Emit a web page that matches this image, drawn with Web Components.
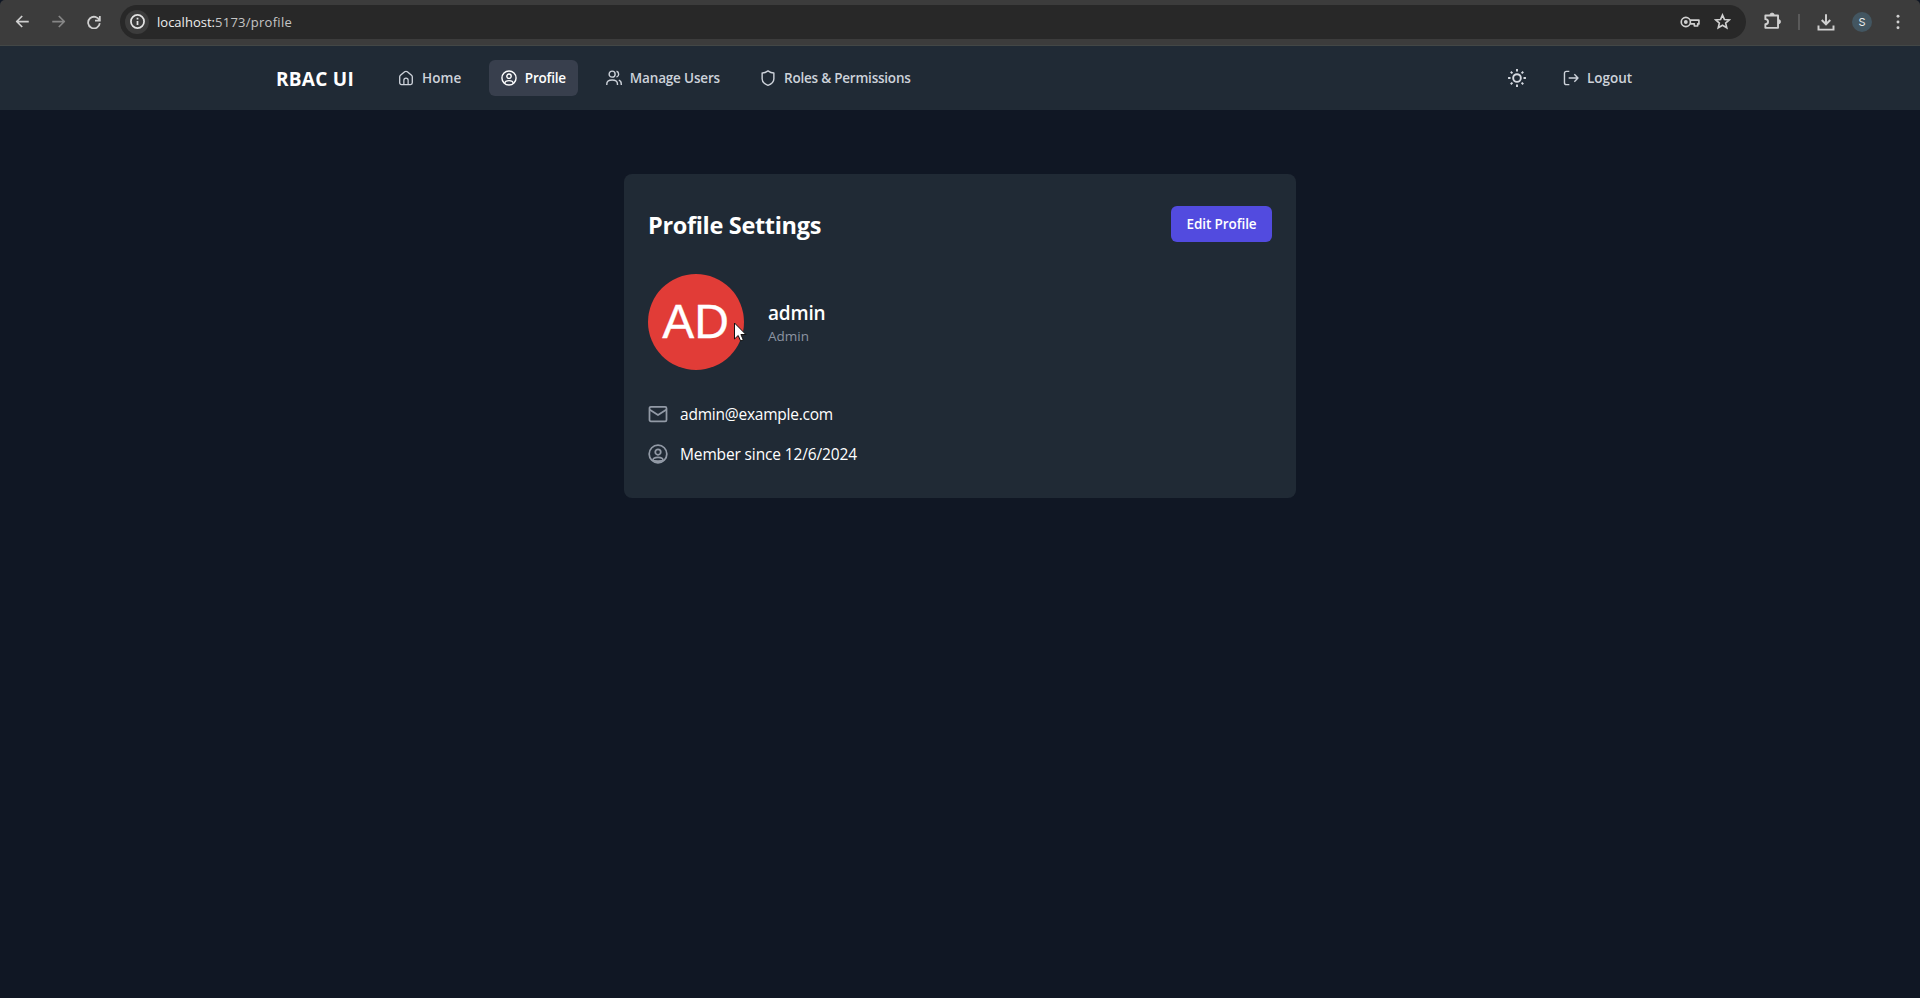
<!DOCTYPE html>
<html lang="en">
<head>
<meta charset="utf-8">
<title>RBAC UI</title>
<style>
html,body{margin:0;height:100%;background:#101724}
body{font-family:"Open Sans","Noto Sans",sans-serif;color:#fff;overflow:hidden}
</style>
</head>
<body>
<app-shell></app-shell>
<script>
const define=(name,html,setup)=>customElements.define(name,class extends HTMLElement{
  connectedCallback(){
    if(this.shadowRoot)return;
    const t=document.createElement('template');
    t.innerHTML=html;
    this.attachShadow({mode:'open'}).appendChild(t.content.cloneNode(true));
    if(setup)setup(this,this.shadowRoot);
  }
});

// Label that spreads its letters over an exact width.
define('fit-text','<style>:host{display:block;white-space:nowrap;flex:none}span{display:inline-block}</style><span><slot></slot></span>',(el,root)=>{
  const w=+el.getAttribute('w'),s=root.querySelector('span');
  const nat=s.getBoundingClientRect().width;
  s.style.letterSpacing=((w-nat)/el.textContent.length)+'px';
  el.style.width=w+'px';
});

const icons={
 home:'<path d="M3 10.2c0-.9.4-1.6 1.1-2.2l6-5.1a3 3 0 0 1 3.8 0l6 5.1c.7.6 1.1 1.3 1.1 2.2v9.3a2.5 2.5 0 0 1-2.500 2.500h-13A2.500 2.500 0 0 1 3 19.500z" transform="translate(-.6 -.2) scale(1.050 1)"/><path d="M8.800 21.500v-6.200a3.200 3.200 0 0 1 6.400 0v6.200"/>',
 user:'<circle cx="12" cy="12" r="10.600"/><circle cx="12" cy="9.300" r="3.300"/><path d="M5.800 19.600c.3-2.600 2.300-3.600 6.200-3.600s5.900 1 6.200 3.600"/>',
 users:'<circle cx="9.200" cy="6.200" r="4.500"/><path d="M1.200 22.500v-1.500c0-4 2.800-6 8-6s8 2 8 6v1.500M15.800 1.900a4.500 4.500 0 0 1 0 8.600M19.200 15.300c2.500.8 3.700 2.700 3.700 5.700v1.500"/>',
 shield:'<path d="M12 1.300c2.800 2 5.600 3.100 8.800 3.300v8.600c0 5-3.600 8-8.800 9.800-5.200-1.800-8.800-4.800-8.800-9.800V4.600C6.400 4.400 9.200 3.300 12 1.300z"/>',
 logout:'<path d="M9.500 2H5.200a3 3 0 0 0-3 3v14a3 3 0 0 0 3 3h4.300M8.500 12h14M17 6.500l5.500 5.500-5.500 5.500"/>',
 sun:'<circle cx="12" cy="12" r="4.600"/><path d="M12 1.300v2.900M12 19.800v2.900M1.300 12h2.900M19.800 12h2.900M4.500 4.500l2 2M17.500 17.500l2 2M4.500 19.500l2-2M17.500 6.500l2-2"/>',
 mail:'<rect x="1.800" y="3.400" width="20.400" height="17.400" rx="1.600"/><path d="M2.200 6.800L12 13.300l9.800-6.500"/>',
 member:'<circle cx="12" cy="12" r="10.600"/><circle cx="12" cy="9.600" r="3.300"/><path d="M6 19.800c-.6-2.600 2-3.700 6-3.700s6.600 1.100 6 3.700c-1.200 1-10.800 1-12 0z"/>',
 back:'<path d="M22 12H3M11.500 3.200L2.700 12l8.800 8.800"/>',
 forward:'<path d="M2 12h19M12.500 3.200l8.800 8.800-8.800 8.800"/>',
 reload:'<path d="M21.300 9.500A10 10 0 1 0 21.900 14"/><path d="M22 1.500v8.300h-8.300" stroke-linejoin="miter"/>',
 info:'<circle cx="12" cy="12" r="10.500"/><path d="M12 11v6.500M12 6v2.600"/>',
 key:'<circle cx="7" cy="12" r="5.500"/><circle cx="7" cy="12" r="1.300" fill="currentColor"/><path d="M12.200 9.700h10.500v4.600h-1.500v2.500h-4v-2.500h-5"/>',
 star:'<path d="M12 2.800l2.700 6.300 6.900.6-5.200 4.500 1.600 6.700-6-3.600-6 3.600 1.600-6.700-5.200-4.500 6.900-.6z" stroke-linejoin="miter"/>',
 ext:'<path d="M3 4.500h16v15.500H3v-4.500c4.500-.5 4.500-6 0-6.500z"/><path d="M8.800 4a2.700 2.700 0 0 1 5.400 0zM19.500 9.600a2.700 2.700 0 0 1 0 5.400z" fill="currentColor" stroke-width="1"/>',
 down:'<path d="M12 1.500v13M6.300 9.300l5.700 5.700 5.700-5.700M2 16.800v5.400h20v-5.400" stroke-linejoin="miter"/>',
 dots:'<g fill="currentColor" stroke="none"><circle cx="12" cy="3.500" r="2.200"/><circle cx="12" cy="12" r="2.200"/><circle cx="12" cy="20.500" r="2.200"/></g>'
};
customElements.define('ui-icon',class extends HTMLElement{
  connectedCallback(){
    if(this.shadowRoot)return;
    const s=this.getAttribute('size')||16,k=this.getAttribute('stroke')||2;
    this.attachShadow({mode:'open'}).innerHTML=`<style>:host{display:block;flex:none;width:${s}px;height:${s}px}svg{display:block}</style><svg width="${s}" height="${s}" viewBox="0 0 24 24" fill="none" stroke="currentColor" stroke-width="${k}" stroke-linejoin="round">${icons[this.getAttribute('name')]}</svg>`;
  }
});

define('nav-item',`<style>
:host{display:flex;align-items:center;gap:8px;height:36px;padding:0 12px;border-radius:6px;color:#cdd2da;font-size:13.500px;font-weight:650;line-height:20px;flex:none}
:host([active]){background:#383f4d;color:#fff}
</style><slot name="icon"></slot><slot></slot>`);

define('browser-bar',`<style>
:host{display:flex;align-items:center;height:46px;box-sizing:border-box;padding:0 14px 2px 14px;background:#3c3c3c;border-bottom:1px solid #434746;border-radius:5px 5px 0 0;color:#d0d0d0}
.tools{display:flex;gap:21px;align-items:center;padding-left:1px}
.dim{color:#868686}
.url{flex:none;width:1626px;height:34px;box-sizing:border-box;border-radius:17px;background:#282828;display:flex;align-items:center;padding:0 15px 0 5px;margin-left:19px}
.info{width:24px;height:24px;border-radius:12px;background:#3c3c3c;display:grid;place-items:center;margin-right:8px;color:#e2e2e2}
.addr{display:flex;font-size:13px;color:#c5c5c5;line-height:20px}
.host{color:#eee}
.push{flex:1}
.end{display:flex;align-items:center;margin-left:17px}
.sep{width:2px;height:16px;background:#5a5a5a;margin:0 17px 0 16px}
.av{width:20px;height:20px;border-radius:10px;background:#435661;color:#eee;font:11px/20px Inter,sans-serif;text-align:center;margin:0 18px 0 17px}
</style>
<div class="tools"><ui-icon name="back" size="15" stroke="2.800"></ui-icon><ui-icon class="dim" name="forward" size="15" stroke="2.800"></ui-icon><ui-icon name="reload" size="14" stroke="3"></ui-icon></div>
<div class="url"><div class="info"><ui-icon name="info" size="15" stroke="2.800"></ui-icon></div>
<div class="addr"><fit-text class="host" w="58">localhost:</fit-text><fit-text w="77">5173/profile</fit-text></div><div class="push"></div>
<ui-icon name="key" size="20" stroke="2"></ui-icon><ui-icon name="star" size="17" stroke="2.300" style="margin-left:14px"></ui-icon></div>
<div class="end"><ui-icon name="ext" size="19" stroke="2.400"></ui-icon><div class="sep"></div><ui-icon name="down" size="18" stroke="2.600"></ui-icon><div class="av">S</div><ui-icon name="dots" size="16"></ui-icon></div>`);

define('nav-bar',`<style>
:host{display:block;background:#202a35}
.in{width:1368px;height:64px;margin:auto;display:flex;align-items:center}
.logo{font-size:19px;font-weight:700;line-height:28px;margin-right:32px;padding-top:2px}
.links{display:flex;gap:16px}
.links nav-item:first-child{margin-right:-.7px}
.right{display:flex;gap:16px;margin-left:auto;align-items:center}
.theme{width:36px;height:36px;display:grid;place-items:center;color:#d5d9e0}
</style><div class="in"><fit-text class="logo" w="78">RBAC UI</fit-text>
<div class="links">
<nav-item><ui-icon slot="icon" name="home" stroke="1.900"></ui-icon><fit-text w="39.500">Home</fit-text></nav-item>
<nav-item active><ui-icon slot="icon" name="user" stroke="2.100"></ui-icon><fit-text w="41">Profile</fit-text></nav-item>
<nav-item><ui-icon slot="icon" name="users" stroke="2.100"></ui-icon><fit-text w="90.200">Manage Users</fit-text></nav-item>
<nav-item><ui-icon slot="icon" name="shield" stroke="2.100"></ui-icon><fit-text w="126.600">Roles &amp; Permissions</fit-text></nav-item>
</div><div class="right"><div class="theme"><ui-icon name="sun" size="20" stroke="2.300"></ui-icon></div>
<nav-item><ui-icon slot="icon" name="logout" stroke="2.100"></ui-icon><fit-text w="45">Logout</fit-text></nav-item></div></div>`);

define('info-row',`<style>:host{display:flex;align-items:center;gap:12px;height:24px;font-size:15.500px;line-height:24px;color:#fff}::slotted(ui-icon){color:#929aa6}</style><slot name="icon"></slot><slot></slot>`);

define('user-avatar',`<style>
:host{display:block;position:relative;width:96px;height:96px;flex:none}
.c{width:96px;height:96px;border-radius:50%;background:#e13c37;font:48px/96px "Liberation Sans",sans-serif;text-align:center;color:#fff;text-indent:-1px;-webkit-text-stroke:.3px #fff}
.cur{position:absolute;left:86px;top:48px}
</style><div class="c"><slot></slot></div>
<svg class="cur" width="13" height="20" viewBox="0 0 13 20"><path d="M.5 1v16l3.700-3.500 2.400 5.500 2.700-1.200-2.400-5.300h5z" fill="#fff" stroke="#111" stroke-width="1"/></svg>`);

define('profile-card',`<style>
:host{display:block;box-sizing:border-box;width:672px;height:324px;margin:64px auto 0;padding:32px 24px;border-radius:8px;background:#202a35}
.head{display:flex;justify-content:space-between;align-items:center;height:36px}
.title{font-size:23.500px;font-weight:700;line-height:32px;padding-top:2px}
.btn{height:36px;width:101px;border-radius:6px;background:#524bdf;display:flex;align-items:center;justify-content:center;font-size:13.500px;font-weight:650;line-height:20px}
.who{display:flex;gap:24px;align-items:center;margin:32px 0}
.name{font-size:19px;font-weight:650;line-height:28px;padding-top:1px;margin-bottom:-1px}
.role{font-size:13.500px;line-height:20px;color:#8c94a2}
info-row+info-row{margin-top:16px}
</style>
<div class="head"><fit-text class="title" w="173">Profile Settings</fit-text><div class="btn"><fit-text w="70">Edit Profile</fit-text></div></div>
<div class="who"><user-avatar>AD</user-avatar><div><fit-text class="name" w="57.500">admin</fit-text><fit-text class="role" w="41">Admin</fit-text></div></div>
<info-row><ui-icon slot="icon" name="mail" size="20" stroke="2.100"></ui-icon><fit-text w="153">admin@example.com</fit-text></info-row>
<info-row><ui-icon slot="icon" name="member" size="20" stroke="2.100"></ui-icon><fit-text w="177">Member since 12/6/2024</fit-text></info-row>`);

define('app-shell',`<style>:host{display:block;height:998px;background:#101724}</style><browser-bar></browser-bar><nav-bar></nav-bar><profile-card></profile-card>`);
</script>
</body>
</html>
